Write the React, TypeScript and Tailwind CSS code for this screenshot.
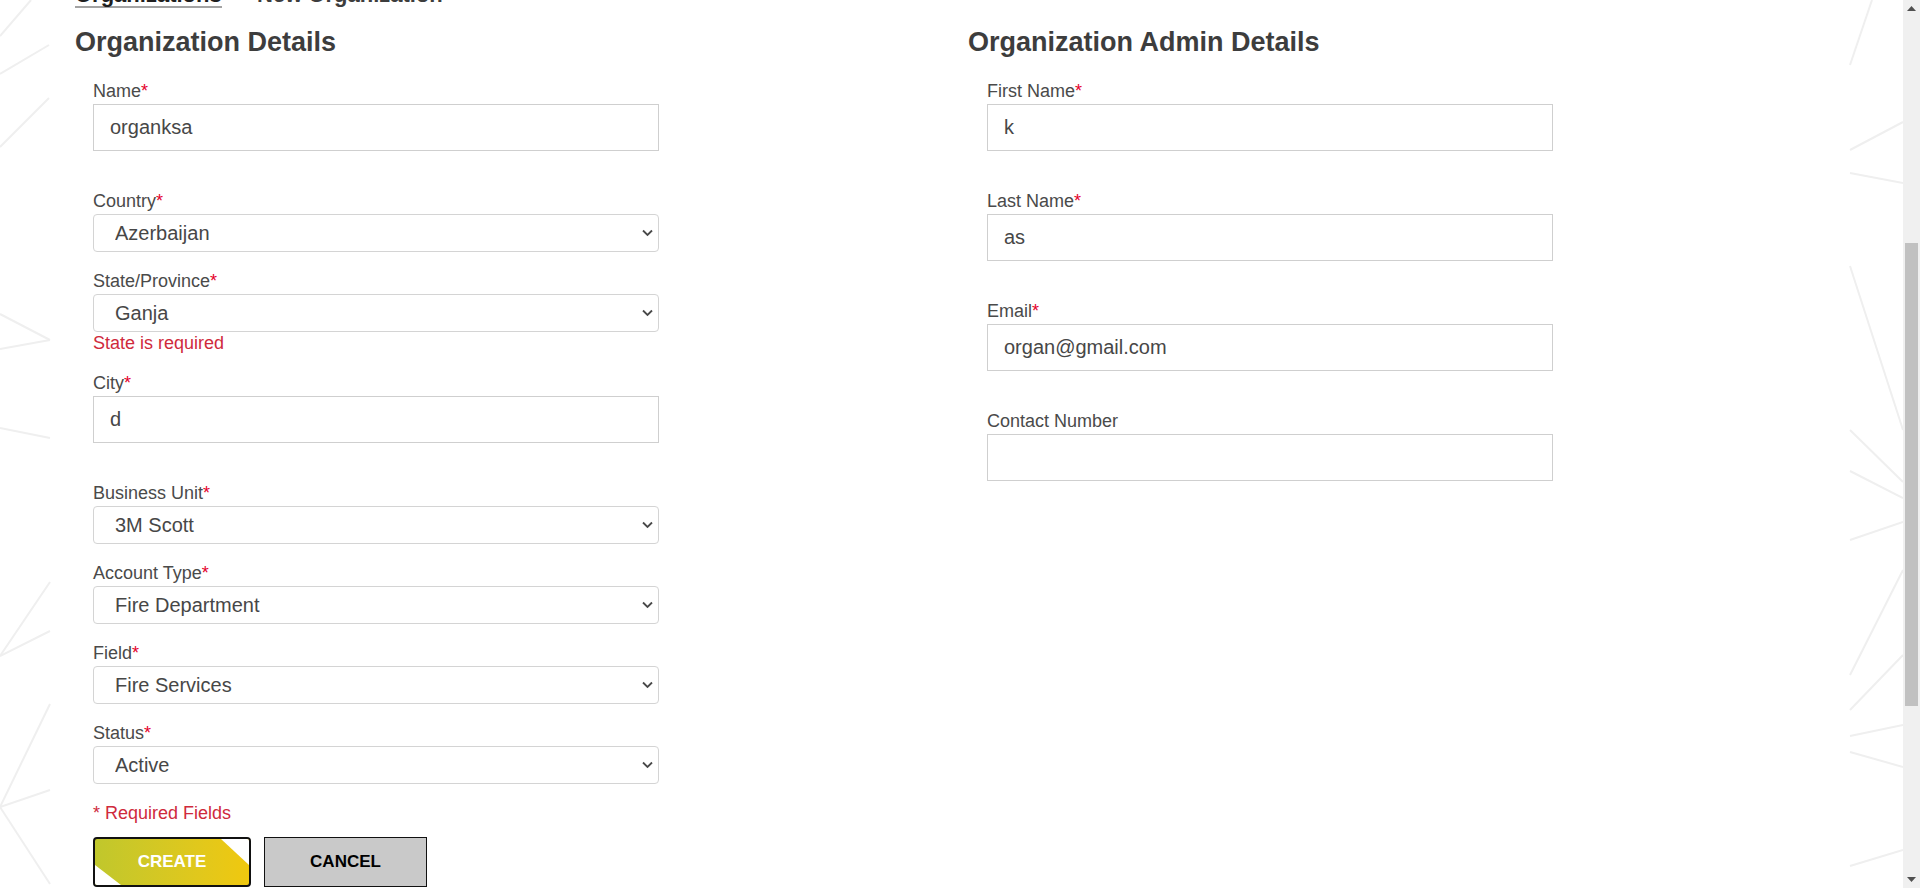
import { useLayoutEffect, useRef } from 'react';

const lines = [
  // left edge
  [31, 0, 0, 36],
  [0, 74, 49, 45],
  [0, 147, 49, 98],
  [0, 314, 50, 340],
  [0, 349, 50, 340],
  [0, 428, 50, 438],
  [0, 656, 50, 582],
  [0, 656, 50, 631],
  [0, 807, 50, 704],
  [0, 807, 50, 790],
  [0, 807, 50, 884],
  // right edge
  [1850, 65, 1872, 0],
  [1850, 150, 1903, 122],
  [1850, 173, 1903, 183],
  [1850, 266, 1903, 430],
  [1850, 430, 1903, 482],
  [1850, 471, 1903, 498],
  [1850, 540, 1903, 522],
  [1850, 675, 1903, 570],
  [1850, 710, 1903, 655],
  [1850, 736, 1903, 725],
  [1850, 752, 1903, 767],
  [1850, 866, 1903, 850],
];

function Label({ text, required }: { text: string; required?: boolean }) {
  return (
    <label className="block text-[18px] leading-[20px] mb-[3px] text-[#4a4a4a]">
      {text}
      {required && <span className="text-[#e4002b]">*</span>}
    </label>
  );
}

function TextField({ label, value, required }: { label: string; value: string; required?: boolean }) {
  return (
    <div className="mb-[19px]">
      <Label text={label} required={required} />
      <input
        defaultValue={value}
        className="block w-[566px] h-[47px] border border-[#cfcfcf] bg-white px-[16px] text-[20px] text-[#474747] outline-none"
      />
      <div className="h-[21px]" />
    </div>
  );
}

function SelectField({
  label,
  value,
  error,
}: {
  label: string;
  value: string;
  error?: string;
}) {
  return (
    <div className="mb-[19px]">
      <Label text={label} required />
      <div className="relative w-[566px]">
        <select
          defaultValue={value}
          className="block w-full h-[38px] appearance-none rounded-[4px] border border-[#d4d4d4] bg-white pl-[21px] pr-8 text-[20px] text-[#474747] outline-none"
        >
          <option>{value}</option>
        </select>
        <svg
          width="11"
          height="7"
          viewBox="0 0 11 7"
          className="pointer-events-none absolute right-[6px] top-1/2 -translate-y-1/2"
        >
          <polyline points="1,1 5.5,5.5 10,1" fill="none" stroke="#4a4a4a" strokeWidth="1.8" />
        </svg>
      </div>
      {error && <div className="h-[22px] text-[18px] leading-[22px] text-[#cf2a3c]">{error}</div>}
    </div>
  );
}

function Scrollbar() {
  return (
    <div className="flex h-screen w-[17px] shrink-0 flex-col bg-[#f0f0f0]">
      <div className="flex h-[17px] items-center justify-center">
        <svg width="9" height="5" viewBox="0 0 9 5">
          <polygon points="0,5 4.5,0 9,5" fill="#505050" />
        </svg>
      </div>
      <div className="flex-1 px-[2px]">
        <div className="mt-[226px] h-[463px] bg-[#c1c1c1]" />
      </div>
      <div className="flex h-[17px] items-center justify-center">
        <svg width="9" height="5" viewBox="0 0 9 5">
          <polygon points="0,0 9,0 4.5,5" fill="#505050" />
        </svg>
      </div>
    </div>
  );
}

export default function App() {
  const scroller = useRef<HTMLDivElement>(null);

  useLayoutEffect(() => {
    if (scroller.current) scroller.current.scrollTop = 433;
  }, []);

  return (
    <div className="flex h-screen bg-white font-['Liberation_Sans',Arial,sans-serif]">
      <div ref={scroller} className="h-screen flex-1 overflow-hidden">
        <div className="relative flex min-h-[1638px] flex-col">
          <svg className="pointer-events-none absolute left-0 top-[433px] h-[888px] w-full">
            {lines.map(([x1, y1, x2, y2], i) => (
              <line key={i} x1={x1} y1={y1} x2={x2} y2={y2} stroke="#efefef" strokeWidth="2" />
            ))}
          </svg>

          {/* page header, scrolled out of view */}
          <header className="relative h-[417px]">
            <div className="flex h-[72px] items-center border-b border-[#e5e5e5] px-[75px]">
              <span className="text-[32px] font-bold text-[#ff0000]">3M</span>
              <span className="ml-4 text-[18px] text-[#333]">Scott Connected</span>
            </div>
            <div className="px-[75px] pt-[120px]">
              <h1 className="text-[40px] font-bold text-[#333]">New Organization</h1>
            </div>
          </header>

          <main className="relative flex-1 pl-[75px]">
            <nav className="mb-[18px] flex items-start gap-[14px] text-[22px] font-bold leading-[22px]">
              <span className="border-b-2 border-[#a3a3a3] text-[#1f1f1f]">Organizations</span>
              <span className="text-[#8a8a8a]">›</span>
              <span className="text-[#3d3d3d]">New Organization</span>
            </nav>

            <div className="grid grid-cols-[893px_1fr]">
              <section>
                <h2 className="mb-[23px] text-[27px] font-bold leading-[32px] text-[#3d3d3d]">
                  Organization Details
                </h2>
                <div className="pl-[18px]">
                  <TextField label="Name" value="organksa" required />
                  <SelectField label="Country" value="Azerbaijan" />
                  <SelectField label="State/Province" value="Ganja" error="State is required" />
                  <TextField label="City" value="d" required />
                  <SelectField label="Business Unit" value="3M Scott" />
                  <SelectField label="Account Type" value="Fire Department" />
                  <SelectField label="Field" value="Fire Services" />
                  <SelectField label="Status" value="Active" />

                  <p className="mb-[14px] text-[18px] leading-[20px] text-[#cf2a3c]">* Required Fields</p>

                  <div className="flex gap-[13px]">
                    <button className="relative h-[50px] w-[158px] overflow-hidden rounded-[4px] border-2 border-[#111] bg-gradient-to-r from-[#c0c72c] to-[#f0c80e] text-[17px] font-bold text-white">
                      <span className="absolute right-0 top-0 h-[26px] w-[28px] bg-white [clip-path:polygon(0_0,100%_0,100%_100%)]" />
                      <span className="absolute bottom-0 left-0 h-[20px] w-[26px] bg-white [clip-path:polygon(0_0,100%_100%,0_100%)]" />
                      <span className="relative">CREATE</span>
                    </button>
                    <button className="h-[50px] w-[163px] border border-[#111] bg-[#c9c9c9] text-[17px] font-bold text-black">
                      CANCEL
                    </button>
                  </div>
                </div>
              </section>

              <section>
                <h2 className="mb-[23px] text-[27px] font-bold leading-[32px] text-[#3d3d3d]">
                  Organization Admin Details
                </h2>
                <div className="pl-[19px]">
                  <TextField label="First Name" value="k" required />
                  <TextField label="Last Name" value="as" required />
                  <TextField label="Email" value="organ@gmail.com" required />
                  <TextField label="Contact Number" value="" />
                </div>
              </section>
            </div>
          </main>

          <footer className="relative flex h-[200px] items-center px-[75px] text-[14px] text-[#777]">
            © 3M 2024. All Rights Reserved.
          </footer>
        </div>
      </div>
      <Scrollbar />
    </div>
  );
}
